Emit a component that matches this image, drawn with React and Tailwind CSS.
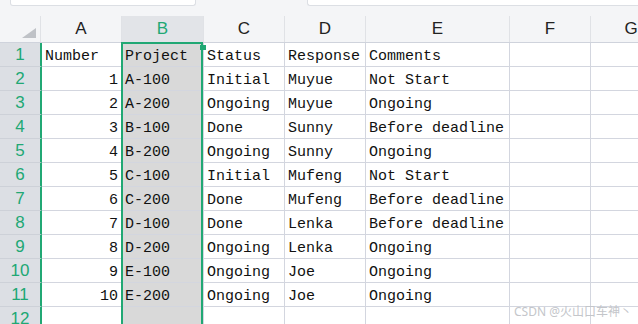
import React from 'react';

const cols = [
    { key: 'A', w: 'w-[81px]' },
    { key: 'B', w: 'w-[82px]' },
    { key: 'C', w: 'w-[81px]' },
    { key: 'D', w: 'w-[81px]' },
    { key: 'E', w: 'w-[144px]' },
    { key: 'F', w: 'w-[81px]' },
    { key: 'G', w: 'w-[81px]' },
];

const rows = [
    ['Number', 'Project', 'Status', 'Response', 'Comments'],
    [1, 'A-100', 'Initial', 'Muyue', 'Not Start'],
    [2, 'A-200', 'Ongoing', 'Muyue', 'Ongoing'],
    [3, 'B-100', 'Done', 'Sunny', 'Before deadline'],
    [4, 'B-200', 'Ongoing', 'Sunny', 'Ongoing'],
    [5, 'C-100', 'Initial', 'Mufeng', 'Not Start'],
    [6, 'C-200', 'Done', 'Mufeng', 'Before deadline'],
    [7, 'D-100', 'Done', 'Lenka', 'Before deadline'],
    [8, 'D-200', 'Ongoing', 'Lenka', 'Ongoing'],
    [9, 'E-100', 'Ongoing', 'Joe', 'Ongoing'],
    [10, 'E-200', 'Ongoing', 'Joe', 'Ongoing'],
    ['', '', '', '', ''],
];

const App = () => {
    return (
        <div className="w-[638px] h-[324px] overflow-hidden bg-[#f4f5f7] relative" style={{ fontFamily: '"Liberation Mono", monospace' }}>
            {/* Formula bar remains */}
            <div className="h-[16px] flex">
                <div className="ml-[10px] w-[186px] h-[6px] bg-white border border-t-0 border-[#dcdfe4] rounded-b-[3px]" />
                <div className="ml-[111px] flex-1 h-[6px] bg-white border border-t-0 border-r-0 border-[#dcdfe4] rounded-bl-[3px]" />
            </div>

            {/* Column headers */}
            <div className="flex h-[27px] border-b border-[#cfd3dc]">
                <div className="w-[41px] shrink-0 relative border-r border-[#e0e2e6]">
                    <div className="absolute left-[22px] top-[12px] w-0 h-0 border-l-[14px] border-l-transparent border-b-[10px] border-b-[#bfc2c7]" />
                </div>
                {cols.map((c) => (
                    <div
                        key={c.key}
                        className={`${c.w} shrink-0 flex items-center justify-center text-[17px] border-r border-[#e0e2e6] ${
                            c.key === 'B' ? 'bg-[#e2e4e8] text-[#21a874]' : 'text-[#222]'
                        }`}
                        style={{ fontFamily: '"Liberation Sans", Arial, sans-serif' }}
                    >
                        {c.key}
                    </div>
                ))}
            </div>

            {/* Body */}
            <div className="relative">
                {rows.map((r, i) => (
                    <div key={i} className="flex h-[24px]">
                        <div
                            className="w-[42px] shrink-0 bg-[#dcdfe4] border-b border-[#cdd1d8] border-r-2 border-r-[#21a874] flex items-center justify-center text-[#21a874] text-[17px] pt-px"
                            style={{ fontFamily: '"Liberation Sans", Arial, sans-serif' }}
                        >
                            {i + 1}
                        </div>
                        {cols.map((c, j) => {
                            const v = r[j] ?? '';
                            const isNum = typeof v === 'number';
                            return (
                                <div
                                    key={c.key}
                                    className={`${j === 0 ? 'w-[80px]' : c.w} shrink-0 h-[24px] flex items-center whitespace-nowrap overflow-hidden text-[15px] text-[#111] border-r border-b border-[#d3d6df] pt-[6px] ${
                                        c.key === 'B' ? 'bg-[#d9d9d9]' : 'bg-white'
                                    } ${isNum ? 'justify-end pr-[3px]' : 'pl-[3px]'}`}
                                >
                                    {v}
                                </div>
                            );
                        })}
                    </div>
                ))}

                {/* Selection box over column B */}
                <div className="absolute left-[121px] top-[-1px] w-[82px] h-[300px] border-2 border-b-0 border-[#21a874] pointer-events-none" />
                <div className="absolute left-[200px] top-[2px] w-[6px] h-[5px] bg-[#21a874]" />
            </div>

            <div
                className="absolute right-[6px] bottom-[3px] text-[12px] text-[#c4c6ca]"
                style={{ fontFamily: '"Noto Sans", "Noto Sans CJK SC", sans-serif' }}
            >
                CSDN @火山口车神丶
            </div>
        </div>
    );
};

export default App;
